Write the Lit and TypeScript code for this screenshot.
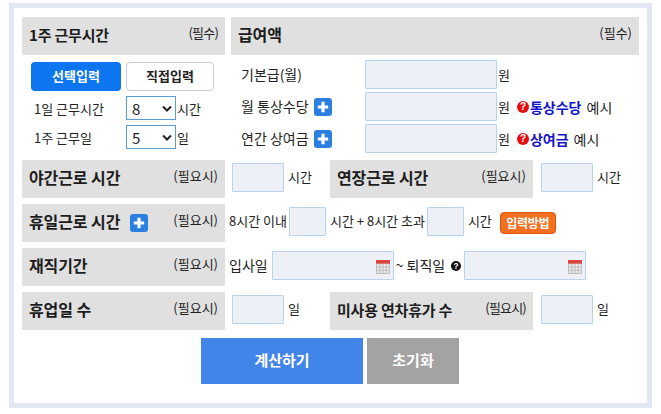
import { LitElement, html, css } from "lit";
import { customElement } from "lit/decorators.js";

const plus = html`<svg class="plus" viewBox="0 0 18 18"><rect width="18" height="18" rx="3" fill="#2a7fe0"/><path d="M9 3.8v10.4M3.8 9h10.4" stroke="#fff" stroke-width="3.2"/></svg>`;
const cal = html`<svg class="cal" viewBox="0 0 15 15"><rect x="0.5" y="0.5" width="14" height="14" fill="#e8e8e8" stroke="#bdbdbd"/><rect width="15" height="4" fill="#d9453f"/><path d="M0 7.5h15M0 11h15M4 4v11M7.5 4v11M11 4v11" stroke="#bdbdbd" stroke-width="1"/></svg>`;
const q = (c: string, cls = "") => html`<svg class="q ${cls}" viewBox="0 0 12 12"><circle cx="6" cy="6" r="6" fill="${c}"/><text x="6" y="9.4" text-anchor="middle" font-size="10" font-weight="900" fill="#fff" font-family="Liberation Sans">?</text></svg>`;

@customElement("app-root")
export class AppRoot extends LitElement {
  static styles = css`
    :host { display: block; width: 661px; height: 414px; font-family: "Noto Sans CJK KR", "Noto Sans", sans-serif; color: #222; background: #fff; overflow: hidden; }
    .frame { box-sizing: border-box; margin: 3px 0 0 9px; width: 643px; height: 405px; border: 5px solid #e3e7f3; padding: 9px 8px 0 8px; display: flex; flex-direction: column; }
    .head { box-sizing: border-box; background: #e0e0e0; height: 38px; display: flex; align-items: center; justify-content: space-between; padding: 0 7px; border-radius: 1px; flex: none; }
    .head b { font-size: 16px; font-weight: 700; color: #1c1c1c; display: flex; align-items: center; gap: 10px; letter-spacing: -0.1px; margin-top: -4px; }
    .head b.small { font-size: 15px; letter-spacing: -0.2px; }
    .head b .plus { margin-top: 4px; }
    .head span { font-size: 13px; margin-top: -8px; }
    .head span.tight { letter-spacing: -0.8px; }
    .w203 { width: 203px; }
    .top { display: flex; gap: 6px; height: 143px; flex: none; }
    .col1 { width: 203px; display: flex; flex-direction: column; }
    .col2 { width: 408px; display: flex; flex-direction: column; }
    .tabs { display: flex; gap: 5px; margin: 7px 0 0 9px; }
    .tab { box-sizing: border-box; height: 29px; border-radius: 4px; font-size: 13px; font-weight: 700; display: flex; align-items: center; justify-content: center; padding-bottom: 2px; }
    .tab.on { width: 90px; background: #0d75f0; color: #fff; }
    .tab.off { width: 88px; background: #fff; border: 1px solid #ccc; }
    .sel-row { display: flex; align-items: center; font-size: 13px; margin: 5px 0 0 12px; height: 24px; }
    .sel-row label { width: 92px; }
    .sel { box-sizing: border-box; width: 50px; height: 24px; border: 1px solid #5a9bd0; display: flex; align-items: center; justify-content: space-between; padding: 0 3px 0 5px; font-size: 15px; margin-right: 1px; }
    .chev { width: 10px; height: 7px; }
    .pay { display: flex; flex-direction: column; gap: 3px; margin-top: 5px; }
    .pay-row { display: flex; align-items: center; height: 29px; font-size: 14px; }
    .pay-label { width: 134px; padding: 0 0 2px 10px; box-sizing: border-box; display: flex; align-items: center; gap: 5px; align-self: stretch; }
    .pay-label .plus { margin-bottom: -2px; }
    .input { box-sizing: border-box; background: #edf1f7; border: 1px solid #b9d3ea; border-radius: 1px; flex: none; margin-top: -3px; }
    .pay .input { margin-top: 0; }
    .i132 { width: 132px; height: 29px; }
    .unit { margin-left: 1px; font-size: 13px; }
    .help { display: flex; align-items: center; margin-left: 7px; gap: 1px; }
    .help b { color: #1414c8; font-weight: 700; }
    .help span { margin-left: 4px; }
    .plus { width: 18px; height: 18px; flex: none; }
    .q { width: 12px; height: 12px; flex: none; }
    .q.dark { width: 10px; height: 10px; margin: -3px 3px 0 6px; }
    .row { display: flex; align-items: center; height: 38px; margin-top: 6px; font-size: 13px; flex: none; }
    .row > span { margin-top: -5px; }
    .row.r1 { margin-top: 0; }
    .i52 { width: 52px; height: 29px; }
    .i37 { width: 37px; height: 29px; }
    .date { width: 122px; height: 29px; display: flex; align-items: center; justify-content: flex-end; padding-right: 3px; }
    .cal { width: 14px; height: 14px; margin-top: 3px; }
    .tag { box-sizing: border-box; width: 56px; height: 22px; margin-left: 8px; padding-bottom: 2px; border-radius: 4px; background: #f2701f; border: 1px solid #d9560e; color: #fff; font-size: 12px; font-weight: 700; display: flex; align-items: center; justify-content: center; letter-spacing: -0.3px; }
    .ml2 { margin-left: 2px; }
    .ml4 { margin-left: 4px; }
    .ml7 { margin-left: 7px; }
    .ml8 { margin-left: 8px; }
    .ml18 { margin-left: 18px; }
    .ml30 { margin-left: 30px; }
    .wide { font-size: 14px; }
    .actions { display: flex; gap: 4px; margin: 8px 0 0 179px; }
    .btn { box-sizing: border-box; height: 46px; padding-bottom: 3px; display: flex; align-items: center; justify-content: center; color: #fff; font-size: 15px; font-weight: 700; }
    .calc { width: 162px; background: #4285e8; }
    .reset { width: 92px; background: #a3a3a3; }
  `;

  render() {
    const chev = html`<svg class="chev" viewBox="0 0 10 7"><path d="M1 1.5l4 4 4-4" fill="none" stroke="#222" stroke-width="2"/></svg>`;
    return html`<div class="frame">
      <div class="top">
        <div class="col1">
          <div class="head"><b class="small">1주 근무시간</b><span class="tight">(필수)</span></div>
          <div class="tabs"><div class="tab on">선택입력</div><div class="tab off">직접입력</div></div>
          <div class="sel-row"><label>1일 근무시간</label><div class="sel">8${chev}</div>시간</div>
          <div class="sel-row"><label>1주 근무일</label><div class="sel">5${chev}</div>일</div>
        </div>
        <div class="col2">
          <div class="head"><b>급여액</b><span>(필수)</span></div>
          <div class="pay">
            <div class="pay-row"><div class="pay-label">기본급(월)</div><div class="input i132"></div><span class="unit">원</span></div>
            <div class="pay-row"><div class="pay-label">월 통상수당 ${plus}</div><div class="input i132"></div><span class="unit">원</span><div class="help">${q("#e01010")}<b>통상수당</b><span>예시</span></div></div>
            <div class="pay-row"><div class="pay-label">연간 상여금 ${plus}</div><div class="input i132"></div><span class="unit">원</span><div class="help">${q("#e01010")}<b>상여금</b><span>예시</span></div></div>
          </div>
        </div>
      </div>
      <div class="row r1">
        <div class="head w203"><b>야간근로 시간</b><span>(필요시)</span></div>
        <div class="input i52 ml7"></div><span class="ml4">시간</span>
        <div class="head w203 ml18"><b>연장근로 시간</b><span>(필요시)</span></div>
        <div class="input i52 ml8"></div><span class="ml4">시간</span>
      </div>
      <div class="row">
        <div class="head w203"><b>휴일근로 시간 ${plus}</b><span>(필요시)</span></div>
        <span class="ml4">8시간 이내</span><div class="input i37 ml2"></div>
        <span class="ml4">시간 + 8시간 초과</span><div class="input i37 ml2"></div>
        <span class="ml4">시간</span><div class="tag">입력방법</div>
      </div>
      <div class="row">
        <div class="head w203"><b>재직기간</b><span>(필요시)</span></div>
        <span class="ml4 wide">입사일</span><div class="input date ml4">${cal}</div>
        <span class="ml2 wide">~ 퇴직일</span>${q("#111", "dark")}<div class="input date">${cal}</div>
      </div>
      <div class="row">
        <div class="head w203"><b>휴업일 수</b><span>(필요시)</span></div>
        <div class="input i52 ml7"></div><span class="ml4">일</span>
        <div class="head w203 ml30"><b class="small">미사용 연차휴가 수</b><span class="tight">(필요시)</span></div>
        <div class="input i52 ml8"></div><span class="ml4">일</span>
      </div>
      <div class="actions"><div class="btn calc">계산하기</div><div class="btn reset">초기화</div></div>
    </div>`;
  }
}
